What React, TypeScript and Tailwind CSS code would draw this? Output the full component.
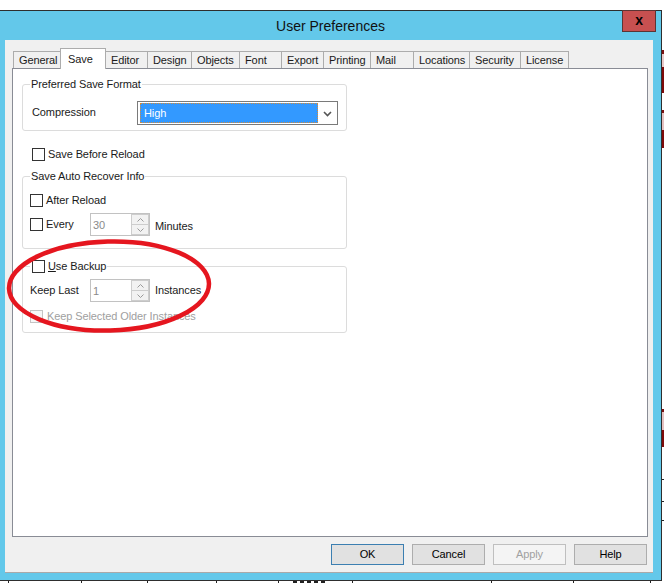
import React from 'react';

const tabs = [
  { label: 'General', w: 'w-[48px]' },
  { label: 'Save', w: 'w-[46px]', selected: true },
  { label: 'Editor', w: 'w-[43px]' },
  { label: 'Design', w: 'w-[45px]' },
  { label: 'Objects', w: 'w-[49px]' },
  { label: 'Font', w: 'w-[43px]' },
  { label: 'Export', w: 'w-[43px]' },
  { label: 'Printing', w: 'w-[48px]' },
  { label: 'Mail', w: 'w-[44px]' },
  { label: 'Locations', w: 'w-[57px]' },
  { label: 'Security', w: 'w-[52px]' },
  { label: 'License', w: 'w-[49px]' },
];

const Checkbox = ({ disabled }: { disabled?: boolean }) => (
  <span
    className={`block w-[13px] h-[13px] shrink-0 border ${
      disabled ? 'border-[#c4c4c4] bg-[#f7f7f7]' : 'border-[#333333] bg-white'
    }`}
  />
);

const Spinner = ({ value }: { value: string }) => (
  <div className="flex w-[60px] h-[23px] border border-[#c2c2c2] bg-white">
    <span className="flex-1 pl-[2px] pt-[3px] text-[#8a8a8a]">{value}</span>
    <div className="flex flex-col w-[18px]">
      <div className="flex-1 flex items-center justify-center border border-[#cdcdcd] bg-[#f2f2f2]">
        <svg width="7" height="4" viewBox="0 0 7 4">
          <polyline points="0.5,3.5 3.5,0.5 6.5,3.5" fill="none" stroke="#9a9a9a" strokeWidth="1" />
        </svg>
      </div>
      <div className="flex-1 flex items-center justify-center border border-t-0 border-[#cdcdcd] bg-[#f2f2f2]">
        <svg width="7" height="4" viewBox="0 0 7 4">
          <polyline points="0.5,0.5 3.5,3.5 6.5,0.5" fill="none" stroke="#9a9a9a" strokeWidth="1" />
        </svg>
      </div>
    </div>
  </div>
);

const Group = ({
  legend,
  className,
  children,
}: {
  legend: React.ReactNode;
  className: string;
  children: React.ReactNode;
}) => (
  <div className={`relative ml-[9px] w-[325px] rounded-[3px] border border-[#dcdcdc] ${className}`}>
    <div className="absolute -top-[8px] left-[7px] bg-white px-[1px] leading-[14px]">{legend}</div>
    {children}
  </div>
);

const DialogButton = ({ label, kind }: { label: string; kind: 'default' | 'normal' | 'disabled' }) => {
  const styles = {
    default: 'border-[#3c7fb1] bg-[#e1e1e1] text-black',
    normal: 'border-[#adadad] bg-[#e1e1e1] text-black',
    disabled: 'border-[#bfbfbf] bg-[#f4f4f4] text-[#a0a0a0]',
  }[kind];
  return (
    <div className={`w-[73px] h-[21px] border flex items-center justify-center ${styles}`}>{label}</div>
  );
};

export default function App() {
  return (
    <div className="relative w-[664px] h-[583px] overflow-hidden bg-white text-[11px] tracking-[-0.1px] text-[#1a1a1a] font-['Liberation_Sans',Arial,sans-serif]">
      <div className="flex">
        <div className="w-[662px] pt-[10px]">
          {/* window */}
          <div className="w-[662px] border-t border-r border-b border-[#2e2e2e] bg-[#63c8ea]">
            <div className="relative h-[29px] flex items-center justify-center">
              <span className="text-[14px] tracking-normal text-[#111] pt-[1px]">User Preferences</span>
              <div className="absolute -top-px right-[5px] w-[34px] h-[22px] border border-[#5c3434] bg-[#c75050] flex items-center justify-center">
                <span className="font-bold text-[14px] leading-none text-black -mt-[2px]">x</span>
              </div>
            </div>

            <div className="ml-[5px] w-[648px] h-[533px] bg-[#f0f0f0] border-b border-[#a9a9a9] pl-[7px] pt-[8px]">
              {/* tab strip */}
              <div className="flex items-end h-[20px] ml-[2px]">
                {tabs.map((t) =>
                  t.selected ? (
                    <div
                      key={t.label}
                      className={`relative z-10 -ml-px -mb-px h-[21px] ${t.w} border border-b-0 border-[#acacac] bg-white pl-[7px] pt-[2px]`}
                    >
                      {t.label}
                    </div>
                  ) : (
                    <div
                      key={t.label}
                      className={`-ml-px h-[17px] ${t.w} border border-b-0 border-[#acacac] bg-[#f0f0f0] pl-[5px] leading-[17px]`}
                    >
                      {t.label}
                    </div>
                  )
                )}
              </div>

              {/* panel */}
              <div className="w-[636px] h-[469px] border border-[#898c95] bg-white">
                <Group legend="Preferred Save Format" className="mt-[15px] h-[47px] pt-[16px] pl-[9px]">
                  <div className="flex items-center">
                    <span className="w-[105px] -mt-[2px]">Compression</span>
                    <div className="relative w-[201px] h-[24px] border border-[#7a7a7a] bg-white">
                      <div className="absolute left-[2px] top-[1px] w-[178px] h-[20px] bg-[#3399ff] border border-dotted border-[#d38a3a] text-white pl-[3px] leading-[18px]">
                        High
                      </div>
                      <svg className="absolute right-[5px] top-[9px]" width="9" height="6" viewBox="0 0 9 6">
                        <polyline points="1,1 4.5,4.5 8,1" fill="none" stroke="#555" strokeWidth="1.6" />
                      </svg>
                    </div>
                  </div>
                </Group>

                <div className="mt-[17px] ml-[19px] flex items-center gap-[3px] h-[13px]">
                  <Checkbox />
                  <span>Save Before Reload</span>
                </div>

                <Group legend="Save Auto Recover Info" className="mt-[15px] h-[73px] pt-[17px] pl-[7px]">
                  <div className="flex items-center gap-[3px] h-[13px]">
                    <Checkbox />
                    <span>After Reload</span>
                  </div>
                  <div className="mt-[6px] flex items-center">
                    <div className="w-[60px] flex items-center gap-[3px]">
                      <Checkbox />
                      <span>Every</span>
                    </div>
                    <Spinner value="30" />
                    <span className="ml-[5px] pt-[3px]">Minutes</span>
                  </div>
                </Group>

                <Group
                  legend={
                    <div className="flex items-center gap-[3px] pl-[1px]">
                      <Checkbox />
                      <span>
                        <span className="underline">U</span>se Backup
                      </span>
                    </div>
                  }
                  className="mt-[17px] h-[67px] pt-[12px] pl-[7px]"
                >
                  <div className="flex items-center">
                    <span className="w-[60px]">Keep Last</span>
                    <Spinner value="1" />
                    <span className="ml-[5px]">Instances</span>
                  </div>
                  <div className="mt-[8px] flex items-center gap-[4px] h-[13px]">
                    <Checkbox disabled />
                    <span className="text-[#a0a0a0]">Keep Selected Older Instances</span>
                  </div>
                </Group>
              </div>

              {/* buttons */}
              <div className="w-[636px] mt-[7px] pr-[1px] flex justify-end gap-[8px]">
                <DialogButton label="OK" kind="default" />
                <DialogButton label="Cancel" kind="normal" />
                <DialogButton label="Apply" kind="disabled" />
                <DialogButton label="Help" kind="normal" />
              </div>
            </div>
            <div className="h-[7px]" />
          </div>

          {/* background app rulers under the dialog */}
          <div className="flex h-[2px]">
            <div className="w-[8px]" />
            <div className="w-[73px] border-l border-[#222]" />
            <div className="w-[66px] border-l border-[#222]" />
            <div className="w-[69px] border-l border-[#222]" />
            <div className="w-[62px] border-l border-[#222]" />
            <div className="w-[74px] border-l border-[#222] flex gap-[3px] pl-[14px]">
              <span className="w-[4px] bg-[#222]" />
              <span className="w-[4px] bg-[#222]" />
              <span className="w-[4px] bg-[#222]" />
              <span className="w-[4px] bg-[#222]" />
              <span className="w-[4px] bg-[#222]" />
            </div>
            <div className="w-[139px] border-l border-[#222]" />
            <div className="w-[82px] border-l border-[#222]" />
            <div className="w-[77px] border-l border-[#222]" />
            <div className="w-[8px] border-l border-[#222]" />
          </div>
        </div>

        {/* background app sliver at the right edge */}
        <div className="w-[2px] flex flex-col">
          <div className="h-[50px]" />
          <div className="h-[4px] bg-[#7a1010]" />
          <div className="h-[13px] bg-[#e8c8c8]" />
          <div className="h-[26px] bg-[#7d0a0a]" />
          <div className="h-[17px]" />
          <div className="h-[3px] bg-[#7a1010]" />
          <div className="h-[17px] bg-[#e4c0c0]" />
          <div className="h-[18px] bg-[#7d0a0a]" />
          <div className="h-[261px]" />
          <div className="h-[3px] bg-[#7a1010]" />
          <div className="h-[18px] bg-[#e4c0c0]" />
          <div className="h-[17px] bg-[#7d0a0a]" />
          <div className="h-[32px]" />
          <div className="h-[1px] bg-[#222]" />
          <div className="h-[21px]" />
          <div className="h-[1px] bg-[#222]" />
          <div className="h-[18px]" />
          <div className="h-[1px] bg-[#222]" />
        </div>
      </div>

      {/* hand-drawn highlight around the backup options */}
      <svg className="absolute left-0 top-0 pointer-events-none" width="664" height="583" viewBox="0 0 664 583">
        <ellipse
          cx="109"
          cy="286"
          rx="100"
          ry="44.5"
          fill="none"
          stroke="#e5161f"
          strokeWidth="4.5"
          transform="rotate(-1.5 109 286)"
        />
      </svg>
    </div>
  );
}
